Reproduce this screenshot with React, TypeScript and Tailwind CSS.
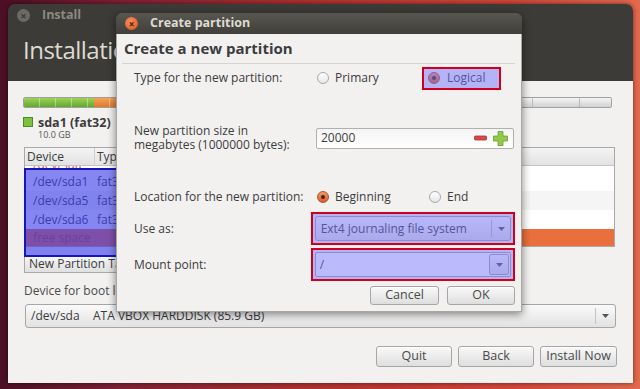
import React from "react";

function Radio({ checked }: { checked?: boolean }) {
  if (checked) {
    return (
      <span className="w-[12px] h-[12px] shrink-0 rounded-full bg-[linear-gradient(#f39a6c,#dc5a2a)] border border-[#b4532c] flex items-center justify-center">
        <span className="w-[4px] h-[4px] rounded-full bg-[#4a2418]" />
      </span>
    );
  }
  return (
    <span className="w-[12px] h-[12px] shrink-0 rounded-full bg-[linear-gradient(#ffffff,#e6e6e6)] border border-[#a9a9a9]" />
  );
}

function Btn({ children, w }: { children: React.ReactNode; w: string }) {
  return (
    <div
      className={`${w} h-full rounded-[3px] border border-[#a6a6a6] bg-[linear-gradient(#f9f9f9,#dedede)] flex items-center justify-center text-[12.5px] text-[#4a4a4a] shadow-[inset_0_1px_0_#ffffff]`}
    >
      {children}
    </div>
  );
}

function Arrow() {
  return (
    <svg width="7" height="4" viewBox="0 0 7 4">
      <path d="M0 0 L7 0 L3.5 4 Z" fill="#555" />
    </svg>
  );
}

function Tint({ strong }: { strong?: boolean }) {
  return (
    <div
      className={`pointer-events-none absolute inset-0 ${
        strong ? "bg-[rgba(60,60,235,0.62)]" : "bg-[rgba(110,110,250,0.48)]"
      }`}
    />
  );
}

export default function App() {
  return (
    <div className="w-[640px] h-[389px] overflow-hidden bg-[linear-gradient(90deg,#4c0f25_0%,#7e1f35_18%,#b2332f_50%,#d4473a_80%,#e36a4e_100%)] pt-[4px] pl-[8px] font-['Open_Sans',sans-serif]">
      <div className="relative w-[625px] h-[379px] flex flex-col shadow-[0_0_5px_rgba(0,0,0,0.55)] rounded-t-[7px]">
        {/* window header */}
        <div className="h-[77px] shrink-0 bg-[#3c3b37] rounded-t-[7px] flex flex-col">
          <div className="h-[22px] flex items-center pl-[9px] pt-[1px]">
            <span className="w-[13px] h-[13px] rounded-full bg-[#6b6a66] flex items-center justify-center text-[#3c3b37] text-[11px] font-bold leading-none">
              ×
            </span>
            <span className="ml-[12px] text-[12.5px] font-bold text-[#8c8983] leading-none">Install</span>
          </div>
          <div className="h-[55px] flex items-center pl-[15px] pb-[8px]">
            <span className="text-[24px] text-[#dfdbd2] leading-none tracking-[-0.5px]">Installation type</span>
          </div>
        </div>

        {/* window body */}
        <div className="flex-1 bg-[#f2f1f0] px-[15px] pt-[16px] flex flex-col text-[#3c3c3c]">
          {/* partition bar */}
          <div className="w-[589px] h-[11px] flex rounded-[2px] overflow-hidden border border-[#a0a0a0]">
            <div className="w-[70px] h-full bg-[repeating-linear-gradient(90deg,transparent_0_15px,rgba(255,255,255,0.35)_15px_16px),linear-gradient(#9ed25a,#62a82c)]" />
            <div className="w-[110px] h-full bg-[repeating-linear-gradient(90deg,transparent_0_15px,rgba(255,255,255,0.35)_15px_16px),linear-gradient(#f7a25a,#e07a28)]" />
            <div className="flex-1 h-full bg-[repeating-linear-gradient(90deg,transparent_0_46px,rgba(160,160,160,0.6)_46px_47px),linear-gradient(#f4f4f4,#d2d2d2)]" />
          </div>

          {/* legend */}
          <div className="mt-[8px] flex">
            <span className="mt-[1px] w-[10px] h-[10px] bg-[#7cc23e] border border-[#4f8a22]" />
            <div className="ml-[5px] flex flex-col">
              <span className="text-[12.5px] font-bold leading-[13px]">sda1 (fat32)</span>
              <span className="text-[9px] leading-[11px] text-[#555]">10.0 GB</span>
            </div>
          </div>

          {/* table */}
          <div className="relative mt-[7px] ml-[1px] w-[591px] h-[108px] flex flex-col">
            <div className="h-[100px] border border-[#a8a8a8] bg-white flex flex-col overflow-hidden">
              <div className="h-[18px] shrink-0 bg-[linear-gradient(#f4f4f4,#e2e2e2)] border-b border-[#c4c4c4] flex items-center text-[12px]">
                <span className="w-[70px] pl-[2px] border-r border-[#cfcfcf]">Device</span>
                <span className="pl-[2px]">Type</span>
              </div>
              <div className="h-[7px] shrink-0 overflow-hidden relative bg-white">
                <span className="absolute left-[8px] top-[-9px] text-[12px] leading-[16px] text-[#d06060]">/dev/sda</span>
              </div>
              <div className="h-[18px] shrink-0 flex items-center text-[12px] bg-white">
                <span className="w-[70px] pl-[8px]">/dev/sda1</span>
                <span className="pl-[2px]">fat32</span>
              </div>
              <div className="h-[19px] shrink-0 flex items-center text-[12px] bg-[#f5f5f5]">
                <span className="w-[70px] pl-[8px]">/dev/sda5</span>
                <span className="pl-[2px]">fat32</span>
              </div>
              <div className="h-[19px] shrink-0 flex items-center text-[12px] bg-white">
                <span className="w-[70px] pl-[8px]">/dev/sda6</span>
                <span className="pl-[2px]">fat32</span>
              </div>
              <div className="h-[18px] shrink-0 flex items-center text-[12px] bg-[#e9703d] text-[#b04a20]">
                <span className="w-[70px] pl-[8px]">free space</span>
              </div>
            </div>
            <div className="h-[8px]" />
            {/* selection overlay */}
            <div className="absolute left-0 top-[21px] w-[97px] h-[89px] border-2 border-[#1616b8]">
              <Tint strong />
            </div>
          </div>

          {/* toolbar row */}
          <div className="h-[18px] ml-[1px] flex">
            <div className="h-full px-[4px] border border-[#a8a8a8] bg-[linear-gradient(#f7f7f7,#e0e0e0)] flex items-center text-[12px]">
              New Partition Table...
            </div>
          </div>

          <div className="mt-[10px] h-[16px] flex items-center ml-[1px] text-[12px] text-[#4a4a4a]">
            Device for boot loader installation:
          </div>

          <div className="mt-[5px] ml-[2px] w-[591px] h-[24px] rounded-[3px] border border-[#a6a6a6] bg-[linear-gradient(#fafafa,#e2e2e2)] flex items-center text-[12px]">
            <span className="pl-[5px] w-[67px]">/dev/sda</span>
            <span>ATA VBOX HARDDISK (85.9 GB)</span>
            <span className="ml-auto h-[16px] border-l border-[#c4c4c4] w-[20px] flex items-center justify-center">
              <Arrow />
            </span>
          </div>

          <div className="mt-[18px] h-[21px] flex justify-end gap-[6px] pr-[1px]">
            <Btn w="w-[76px]">Quit</Btn>
            <Btn w="w-[76px]">Back</Btn>
            <Btn w="w-[77px]">Install Now</Btn>
          </div>
        </div>

        {/* Create partition dialog */}
        <div className="absolute left-[108px] top-[9px] w-[406px] h-[299px] flex flex-col rounded-t-[6px] shadow-[0_2px_8px_rgba(0,0,0,0.5)] text-[#3c3c3c]">
          <div className="h-[21px] shrink-0 rounded-t-[6px] bg-[linear-gradient(#57564f,#403f3b)] flex items-center pl-[9px]">
            <span className="w-[13px] h-[13px] rounded-full bg-[radial-gradient(circle_at_40%_35%,#f6905e,#d8501e)] flex items-center justify-center text-[#5a1c08] text-[10px] font-bold leading-none">
              ×
            </span>
            <span className="ml-[12px] text-[12.5px] font-bold text-[#dfdbd2] leading-none">Create partition</span>
          </div>
          <div className="flex-1 bg-[#f2f1f0] border border-t-0 border-[#a9a7a2] flex flex-col pl-[7px] pr-[6px]">
            <div className="h-[29px] flex items-center text-[15px] font-bold">Create a new partition</div>
            <div className="h-px ml-[-2px] w-[393px] bg-[#d6d4d0]" />

            {/* type row */}
            <div className="h-[28px] flex items-center pl-[10px]">
              <div className="w-[179px] text-[12px]">Type for the new partition:</div>
              <div className="flex items-center pl-[4px]">
                <div className="w-[105px] flex items-center gap-[6px] text-[12px]">
                  <Radio />
                  <span>Primary</span>
                </div>
                <div className="relative w-[79px] h-[23px] border-2 border-[#cf001d] flex items-center pl-[4px] gap-[7px] text-[12px]">
                  <Radio checked />
                  <span>Logical</span>
                  <Tint />
                </div>
              </div>
            </div>

            <div className="h-[32px]" />

            {/* size row */}
            <div className="h-[28px] flex items-center pl-[10px]">
              <div className="w-[179px] text-[12px] leading-[14px]">
                New partition size in
                <br />
                megabytes (1000000 bytes):
              </div>
              <div className="ml-[3px] w-[198px] h-[21px] rounded-[2px] border border-[#b0b0b0] bg-[linear-gradient(#f4f4f4,#ffffff)] flex items-center text-[12px]">
                <span className="pl-[4px]">20000</span>
                <span className="ml-auto mr-[5px] flex items-center gap-[6px]">
                  <svg width="13" height="14" viewBox="0 0 13 14">
                    <rect x="0.5" y="5" width="12" height="4" rx="1" fill="#d9494b" stroke="#a83032" strokeWidth="0.8" />
                  </svg>
                  <svg width="15" height="15" viewBox="0 0 15 15">
                    <path
                      d="M5 0.5 H10 V5 H14.5 V10 H10 V14.5 H5 V10 H0.5 V5 H5 Z"
                      fill="#93c94a"
                      stroke="#6c9e2e"
                      strokeWidth="0.8"
                    />
                  </svg>
                </span>
              </div>
            </div>

            <div className="h-[33px]" />

            {/* location row */}
            <div className="h-[24px] flex items-center pl-[10px]">
              <div className="w-[179px] text-[12px]">Location for the new partition:</div>
              <div className="flex items-center pl-[4px] text-[12px]">
                <div className="w-[112px] flex items-center gap-[6px]">
                  <Radio checked />
                  <span>Beginning</span>
                </div>
                <div className="flex items-center gap-[6px]">
                  <Radio />
                  <span>End</span>
                </div>
              </div>
            </div>

            <div className="h-[3px]" />

            {/* use as row */}
            <div className="h-[33px] flex items-center pl-[10px]">
              <div className="w-[179px] text-[12px]">Use as:</div>
              <div className="relative w-[207px] h-[33px] border-2 border-[#cf001d] p-[2px]">
                <div className="w-full h-full rounded-[3px] border border-[#a6a6a6] bg-[linear-gradient(#fafafa,#e0e0e0)] flex items-center text-[12px]">
                  <span className="pl-[5px]">Ext4 journaling file system</span>
                  <span className="ml-auto h-[17px] w-[19px] border-l border-[#bcbcbc] flex items-center justify-center">
                    <Arrow />
                  </span>
                </div>
                <Tint />
              </div>
            </div>

            <div className="h-[3px]" />

            {/* mount row */}
            <div className="h-[33px] flex items-center pl-[10px]">
              <div className="w-[179px] text-[12px]">Mount point:</div>
              <div className="relative w-[207px] h-[33px] border-2 border-[#cf001d] p-[2px]">
                <div className="w-full h-full rounded-[2px] border border-[#a6a6a6] bg-white flex items-center text-[12px]">
                  <span className="pl-[4px]">/</span>
                  <span className="ml-auto mr-[1px] h-[21px] w-[20px] rounded-[2px] border border-[#a6a6a6] bg-[linear-gradient(#fafafa,#e0e0e0)] flex items-center justify-center">
                    <Arrow />
                  </span>
                </div>
                <Tint />
              </div>
            </div>

            <div className="h-[5px]" />

            <div className="h-[19px] flex justify-end gap-[8px]">
              <Btn w="w-[69px]">Cancel</Btn>
              <Btn w="w-[68px]">OK</Btn>
            </div>
          </div>
        </div>
      </div>
    </div>
  );
}
